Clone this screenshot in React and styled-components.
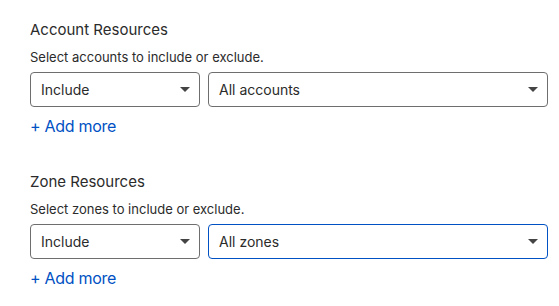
import React from "react";
import styled, { createGlobalStyle } from "styled-components";

const GlobalStyle = createGlobalStyle`
  body {
    margin: 0;
    background: #ffffff;
    font-family: Inter, "Noto Sans", sans-serif;
    color: #313131;
  }
`;

const Page = styled.div`
  padding: 20px 11px 0 30px;
  display: flex;
  flex-direction: column;
  gap: 36px;
`;

const Section = styled.section`
  display: flex;
  flex-direction: column;
`;

const Heading = styled.h3`
  margin: 0;
  font-size: 15px;
  font-weight: 400;
  line-height: 20px;
  color: #2b2b2b;
`;

const Hint = styled.p`
  margin: 9px 0 0;
  font-size: 13px;
  line-height: 16px;
  color: #2b2b2b;
`;

const Row = styled.div`
  display: flex;
  gap: 8px;
  margin-top: 7px;
`;

const Select = styled.div`
  box-sizing: border-box;
  height: 35px;
  width: ${(p) => (p.$wide ? "auto" : "170px")};
  flex: ${(p) => (p.$wide ? "1" : "none")};
  display: flex;
  align-items: center;
  justify-content: space-between;
  padding: 0 9px 0 10px;
  border: 1px solid ${(p) => (p.$focused ? "#0051c3" : "#6e6e6e")};
  border-radius: 4px;
  font-size: 14px;
  color: #2b2b2b;
`;

const Caret = styled.span`
  width: 0;
  height: 0;
  border-left: 5.5px solid transparent;
  border-right: 5.5px solid transparent;
  border-top: 5px solid #444;
`;

const AddMore = styled.a`
  margin-top: 9px;
  align-self: flex-start;
  font-size: 16px;
  line-height: 20px;
  letter-spacing: -0.3px;
  color: #0051c3;
  text-decoration: none;
  cursor: pointer;
`;

const groups = [
  {
    title: "Account Resources",
    hint: "Select accounts to include or exclude.",
    value: "All accounts",
    focused: false,
  },
  {
    title: "Zone Resources",
    hint: "Select zones to include or exclude.",
    value: "All zones",
    focused: true,
  },
];

export default function App() {
  return (
    <>
      <GlobalStyle />
      <Page>
        {groups.map((g) => (
          <Section key={g.title}>
            <Heading>{g.title}</Heading>
            <Hint>{g.hint}</Hint>
            <Row>
              <Select>
                Include
                <Caret />
              </Select>
              <Select $wide $focused={g.focused}>
                {g.value}
                <Caret />
              </Select>
            </Row>
            <AddMore>+ Add more</AddMore>
          </Section>
        ))}
      </Page>
    </>
  );
}
